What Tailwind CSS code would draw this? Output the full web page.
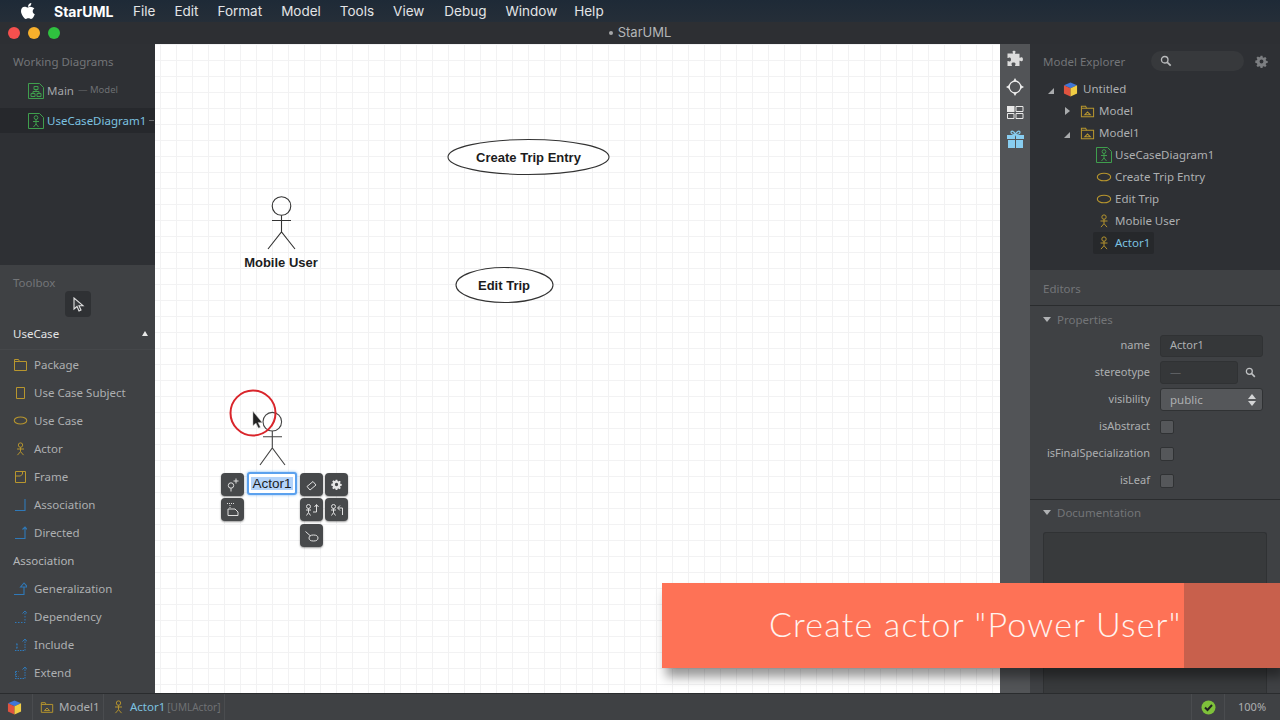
<!DOCTYPE html>
<html>
<head>
<meta charset="utf-8">
<script src="https://cdn.jsdelivr.net/npm/@tailwindcss/browser@4"></script>
</head>
<body class="m-0">
<svg width="0" height="0" class="absolute">
  <defs>
    <symbol id="actor" viewBox="0 0 14 16"><g fill="none" stroke="#b8962e" stroke-width="1.1"><circle cx="7" cy="3.5" r="2.5"/><path d="M7 6v5M3 8h8M7 11l-3.5 4M7 11l3.5 4"/></g></symbol>
    <symbol id="oval" viewBox="0 0 16 16"><ellipse cx="8" cy="8" rx="6.7" ry="3.8" fill="none" stroke="#b8962e" stroke-width="1.1"/></symbol>
    <symbol id="model" viewBox="0 0 16 16"><g fill="none" stroke="#b8962e" stroke-width="1.1"><path d="M1.5 13.5V2.5h4.5l1 2h7.5v9z"/><path d="M1.5 4.5h5.5M5 11.5l3-3 3 3z"/></g></symbol>
    <symbol id="dgactor" viewBox="0 0 16 16"><g fill="none" stroke="#3f9e4d" stroke-width="1"><path d="M.5.5h11l4 4v11H.5z"/><circle cx="8" cy="4.6" r="1.9"/><path d="M8 6.5v4.5M5 8.5h6M8 11l-2.5 3M8 11l2.5 3"/></g></symbol>
    <symbol id="cube" viewBox="0 0 16 16"><path d="M8 .5l7 3L8 6.600 1 3.500z" fill="#3f76d8"/><path d="M1 3.500l7 3.100V15.500l-7-3.300z" fill="#e0533f"/><path d="M15 3.500L8 6.600V15.500l7-3.300z" fill="#f0cd45"/></symbol>
    <symbol id="gear" viewBox="0 0 16 16"><path fill="currentColor" fill-rule="evenodd" d="M6.8 1h2.4l.4 2 1.2.5 1.7-1.1 1.7 1.7-1.1 1.7.5 1.2 2 .4v2.4l-2 .4-.5 1.2 1.1 1.7-1.7 1.7-1.7-1.1-1.2.5-.4 2H6.800l-.4-2-1.2-.5-1.700 1.100-1.700-1.700 1.100-1.700-.5-1.200-2-.4V6.800l2-.4.500-1.200-1.100-1.700 1.700-1.700 1.700 1.100 1.200-.5zM8 5.600a2.400 2.400 0 100 4.800 2.400 2.400 0 000-4.800z"/></symbol>
    <symbol id="search" viewBox="0 0 14 14"><circle cx="5.500" cy="5.500" r="3.800" fill="none" stroke="currentColor" stroke-width="1.600"/><path d="M8.500 8.500l4 4" stroke="currentColor" stroke-width="2"/></symbol>
  </defs>
</svg>

<div class="relative flex h-[720px] w-[1280px] flex-col overflow-hidden bg-[#3f4144] font-['Noto_Sans',sans-serif] text-[11.500px] text-[#adafb1]">
  <!-- mac menu bar -->
  <div class="flex h-[22px] shrink-0 items-center bg-linear-to-b from-[#1e2a37] to-[#252e38] font-['Inter',sans-serif] text-[13.500px] text-[#e2e4e6]">
    <svg class="ml-[21px] h-[16px] w-[14px]" viewBox="0 0 14 16"><path fill="#fff" d="M10.300 0c.1 1.100-.3 2-.9 2.700-.6.700-1.500 1.200-2.400 1.100-.1-1 .4-2 .9-2.600C8.500.500 9.500.100 10.300 0zM13.400 5.500c-1.100.7-1.700 1.600-1.700 2.800 0 1.400.8 2.400 2.100 3-.3.900-.8 1.800-1.300 2.600-.8 1.100-1.500 2-2.500 2-1 0-1.400-.6-2.600-.6s-1.600.6-2.600.6c-1 0-1.800-1-2.600-2.200C.8 11.900 0 9.800 0 8c0-2.700 1.800-4.200 3.600-4.200 1.100 0 2 .7 2.700.7.700 0 1.700-.8 3-.8 1.400.1 2.800.5 4.100 1.800z"/></svg>
    <span class="ml-[19px] w-[60px] whitespace-nowrap text-[14px] font-bold text-white">StarUML</span>
    <span class="ml-[19px]">File</span>
    <span class="ml-[19px]">Edit</span>
    <span class="ml-[19px]">Format</span>
    <span class="ml-[19px]">Model</span>
    <span class="ml-[19px]">Tools</span>
    <span class="ml-[19px]">View</span>
    <span class="ml-[20px]">Debug</span>
    <span class="ml-[19px]">Window</span>
    <span class="ml-[17px]">Help</span>
  </div>
  <!-- title bar -->
  <div class="relative flex h-[22px] shrink-0 items-center justify-center gap-[5px] bg-[#2d2f33] font-['Inter',sans-serif] text-[13px] text-[#b4b6b8]">
    <div class="absolute left-[8px] top-[5px] flex gap-[8px]">
      <span class="h-[12px] w-[12px] rounded-full bg-[#f5504e]"></span>
      <span class="h-[12px] w-[12px] rounded-full bg-[#f8b02c]"></span>
      <span class="h-[12px] w-[12px] rounded-full bg-[#2fc13f]"></span>
    </div>
    <span class="h-[4px] w-[4px] rounded-full bg-[#a4a6a8]"></span><span>StarUML</span>
  </div>

  <div class="flex min-h-0 flex-1">
    <!-- left -->
    <div class="flex w-[155px] shrink-0 flex-col overflow-hidden">
      <div class="h-[221px] shrink-0 bg-[#2e3034]">
        <div class="pl-[13px] pt-[9px] leading-[18px] text-[#737578]">Working Diagrams</div>
        <div class="mt-[7px] flex h-[25px] items-center whitespace-nowrap pl-[28px]">
          <svg class="mr-[3px] h-[16px] w-[16px]" viewBox="0 0 16 16"><g fill="none" stroke="#3f9e4d"><path d="M.5.5h11l4 4v11H.5z"/><path d="M6 3.500h4v3H6zM3 10.500h4v3H3zM9 10.500h4v3H9zM8 6.500v2M5 10.500v-2h6v2"/></g></svg>
          <span class="text-[#a4a6a9]">Main</span><span class="ml-[4px] text-[9.500px] text-[#6d6f72]">— Model</span>
        </div>
        <div class="mt-[5px] flex h-[25px] w-[155px] items-center whitespace-nowrap bg-[#26282c] pl-[28px]">
          <svg class="mr-[3px] h-[16px] w-[16px] shrink-0"><use href="#dgactor"/></svg>
          <span class="text-[#7cc2e0]">UseCaseDiagram1</span><span class="ml-[3px] h-px w-[5px] bg-[#6d6f72]"></span>
        </div>
      </div>
      <div class="min-h-0 flex-1 bg-[#3f4144]">
        <div class="pl-[13px] pt-[9px] leading-[18px] text-[#737578]">Toolbox</div>
        <div class="ml-[65px] -mt-px flex h-[26px] w-[26px] items-center justify-center rounded-[4px] bg-[#2f3134] pl-[2px]">
          <svg class="h-[15px] w-[12px]" viewBox="0 0 12 15"><path d="M1 1v11l3-2.500 2 4.500 2-1-2-4.300h4z" fill="#3a3c3f" stroke="#e2e2e2" stroke-width="1.100"/></svg>
        </div>
        <div class="mt-[5px] flex h-[28px] items-center justify-between border-b border-[#45474a] pb-[3px] pl-[13px] pr-[7px] text-[#e4e5e6]">
          <span>UseCase</span><span class="mb-[1px] h-0 w-0 border-x-[3.500px] border-b-[5px] border-x-transparent border-b-[#e8e8e8]"></span>
        </div>
        <div class="flex h-[28px] items-center pl-[14px] pt-[1px]"><svg class="mr-[7px] h-[14px] w-[13px]" viewBox="0 0 13 14"><path d="M.5 12.500V1.500h4l1 2h7v9zM.5 3.500h5" fill="none" stroke="#b8962e"/></svg>Package</div>
        <div class="flex h-[28px] items-center pl-[16px] pt-[1px]"><svg class="mr-[9px] h-[12px] w-[9px]" viewBox="0 0 9 12"><path d="M.5.500h8v11h-8z" fill="none" stroke="#b8962e"/></svg>Use Case Subject</div>
        <div class="flex h-[28px] items-center pl-[13px] pt-[1px]"><svg class="mr-[6px] h-[15px] w-[15px]"><use href="#oval"/></svg>Use Case</div>
        <div class="flex h-[28px] items-center pl-[14px] pt-[1px]"><svg class="mr-[7px] h-[14px] w-[13px]"><use href="#actor"/></svg>Actor</div>
        <div class="flex h-[28px] items-center pl-[15px] pt-[1px]"><svg class="mr-[8px] h-[12px] w-[11px]" viewBox="0 0 11 12"><path d="M.5.500h10v11H.5zM.5 5h5l2-2V.5" fill="none" stroke="#b8962e"/></svg>Frame</div>
        <div class="flex h-[28px] items-center pl-[14px] pt-[1px]"><svg class="mr-[7px] h-[14px] w-[13px]" viewBox="0 0 13 14"><path d="M1 12.500h10V1" fill="none" stroke="#2f79b9" stroke-width="1.100"/></svg>Association</div>
        <div class="flex h-[28px] items-center pl-[14px] pt-[1px]"><svg class="mr-[7px] h-[14px] w-[13px]" viewBox="0 0 13 14"><path d="M1 12.500h10V1M8.500 3.500L11 1l2 2.500" fill="none" stroke="#2f79b9" stroke-width="1.100"/></svg>Directed</div>
        <div class="flex h-[28px] items-center pl-[13px] pt-[1px] text-[#b4b6b8]">Association</div>
        <div class="flex h-[28px] items-center pl-[14px] pt-[1px]"><svg class="mr-[7px] h-[14px] w-[13px]" viewBox="0 0 13 14"><path d="M0 12.500h10V4.500M6.500 5L10 1l3.500 4z" fill="none" stroke="#2f79b9" stroke-width="1.100"/></svg>Generalization</div>
        <div class="flex h-[28px] items-center pl-[14px] pt-[1px]"><svg class="mr-[7px] h-[14px] w-[13px]" viewBox="0 0 13 14"><path d="M1 12.500h10V2" fill="none" stroke="#2f79b9" stroke-dasharray="1.500 1.500"/><path d="M8.500 3.500L11 1l2 2.500" fill="none" stroke="#2f79b9"/></svg>Dependency</div>
        <div class="flex h-[28px] items-center pl-[14px] pt-[1px]"><svg class="mr-[7px] h-[14px] w-[13px]" viewBox="0 0 13 14"><path d="M1 12.500h10V2M2 6h2M3 6v4M2 10h2" fill="none" stroke="#2f79b9" stroke-dasharray="1.500 1"/><path d="M8.500 3.500L11 1l2 2.500" fill="none" stroke="#2f79b9"/></svg>Include</div>
        <div class="flex h-[28px] items-center pl-[14px] pt-[1px]"><svg class="mr-[7px] h-[14px] w-[13px]" viewBox="0 0 13 14"><path d="M1 12.500h10V2M1.500 5.500h3M1.500 5.500v5h3M1.500 8h2" fill="none" stroke="#2f79b9" stroke-dasharray="1.500 1"/><path d="M8.500 3.500L11 1l2 2.500" fill="none" stroke="#2f79b9"/></svg>Extend</div>
      </div>
    </div>

    <!-- canvas -->
    <div class="relative w-[845px] shrink-0 overflow-hidden bg-white bg-[linear-gradient(to_right,#f2f2f3_1px,transparent_1px),linear-gradient(to_bottom,#f2f2f3_1px,transparent_1px)] bg-[size:16px_16px] bg-[position:5px_0px] font-['Liberation_Sans',sans-serif] text-[#1c1c1c]">
      <svg class="absolute left-0 top-0" width="845" height="649" viewBox="0 0 845 649">
        <g fill="#fff" stroke="#333" stroke-width="1.100">
          <ellipse cx="373.500" cy="113" rx="80.500" ry="17.500"/>
          <ellipse cx="349.500" cy="241" rx="48.500" ry="17.500"/>
        </g>
        <g fill="none" stroke="#333" stroke-width="1.100">
          <circle cx="126.500" cy="162" r="9.300"/><path d="M126.500 171.300V188M117 176.500h19M113 205l13.500-17 13.500 17"/>
        </g>
        <g fill="none" stroke="#444" stroke-width="1.100">
          <circle cx="117.300" cy="377.700" r="9.300"/><path d="M117.300 387v17M108 392.700h19M105 421l12.300-17 12.700 17"/>
        </g>
        <circle cx="98" cy="369" r="22.500" fill="none" stroke="#d9252b" stroke-width="2"/>
        <path d="M98 367.500v14l3-2.500 2.500 5 1.800-.8-2.300-4.800h4z" fill="#222" stroke="#aaa" stroke-width=".5"/>
      </svg>
      <div class="absolute left-[321px] top-[105px] w-[105px] text-center text-[13px] font-bold leading-[18px]">Create Trip Entry</div>
      <div class="absolute left-[299px] top-[233px] w-[100px] text-center text-[13px] font-bold leading-[18px]">Edit Trip</div>
      <div class="absolute left-[76px] top-[210px] w-[100px] text-center text-[13px] font-bold leading-[18px]">Mobile User</div>

      <!-- inline editor -->
      <div class="absolute left-[92px] top-[428px] flex h-[23px] w-[50px] items-center justify-center rounded-[3px] border-2 border-[#5ba1ee] bg-white text-[13.500px] leading-none shadow-[0_0_3px_#7ab4f0]"><span class="bg-[#b3d3fa] px-[1px]">Actor1</span></div>
      <div class="absolute left-[66px] top-[429px] flex h-[23px] w-[23px] items-center justify-center rounded-[4px] bg-[#47494b] shadow-[0_1px_2px_#0006]"><svg class="h-[15px] w-[15px]" viewBox="0 0 15 15"><g fill="none" stroke="#e0e0e0"><circle cx="6" cy="8.500" r="2.700"/><path d="M6 11.200v3.300M11 1.500v5M8.500 4h5"/></g></svg></div>
      <div class="absolute left-[66px] top-[454px] flex h-[23px] w-[23px] items-center justify-center rounded-[4px] bg-[#47494b] shadow-[0_1px_2px_#0006]"><svg class="h-[15px] w-[15px]" viewBox="0 0 15 15"><g fill="none" stroke="#e0e0e0"><path d="M2 1.500h7M5 3v3" stroke-dasharray="1 1"/><path d="M3 7h7l3 3v3.500H3z"/></g></svg></div>
      <div class="absolute left-[145px] top-[429px] flex h-[23px] w-[23px] items-center justify-center rounded-[4px] bg-[#47494b] shadow-[0_1px_2px_#0006]"><svg class="h-[15px] w-[15px]" viewBox="0 0 15 15"><path d="M3 9.500l6-5 3 3.500-6 5z" fill="none" stroke="#e0e0e0"/></svg></div>
      <div class="absolute left-[170px] top-[429px] flex h-[23px] w-[23px] items-center justify-center rounded-[4px] bg-[#47494b] text-[#e6e6e6] shadow-[0_1px_2px_#0006]"><svg class="h-[11px] w-[11px]"><use href="#gear"/></svg></div>
      <div class="absolute left-[145px] top-[454px] flex h-[23px] w-[23px] items-center justify-center rounded-[4px] bg-[#47494b] shadow-[0_1px_2px_#0006]"><svg class="h-[15px] w-[15px]" viewBox="0 0 15 15"><g fill="none" stroke="#e0e0e0"><circle cx="4.500" cy="4.500" r="2"/><path d="M4.500 6.500v4M2 8h5M4.500 10.500l-2 3M4.500 10.500l2 3M9 10h3.500V3M10.500 5l2-2.500 2 2.500"/></g></svg></div>
      <div class="absolute left-[170px] top-[454px] flex h-[23px] w-[23px] items-center justify-center rounded-[4px] bg-[#47494b] shadow-[0_1px_2px_#0006]"><svg class="h-[15px] w-[15px]" viewBox="0 0 15 15"><g fill="none" stroke="#e0e0e0"><circle cx="4.500" cy="4.500" r="2"/><path d="M4.500 6.500v4M2 8h5M4.500 10.500l-2 3M4.500 10.500l2 3M13.500 13V6H9M11 3.500L8.500 6 11 8.500"/></g></svg></div>
      <div class="absolute left-[145px] top-[480px] flex h-[23px] w-[23px] items-center justify-center rounded-[4px] bg-[#47494b] shadow-[0_1px_2px_#0006]"><svg class="h-[15px] w-[15px]" viewBox="0 0 15 15"><g fill="none" stroke="#e0e0e0"><ellipse cx="9.500" cy="10" rx="4.500" ry="3"/><path d="M1.500 3.500l5 4.500"/></g></svg></div>
    </div>

    <!-- tool strip -->
    <div class="flex w-[30px] shrink-0 flex-col items-center bg-[#525457] pt-[6px]">
      <svg class="h-[18px] w-[18px]" viewBox="0 0 18 18"><path fill="#dcdcdc" d="M6.500 1.500c0-1 3-1 3 0 0 1-.5 1.300-.5 2.300h4.500v4c1 0 1.300-.5 2.300-.5 1.500 0 1.500 4 0 4-1 0-1.300-.5-2.300-.5v5.200H9c0-1 .5-1.300.5-2.300 0-1.600-4-1.600-4 0 0 1 .5 1.300.5 2.300H1.500v-5c1 0 1.300.5 2.300.5 1.600 0 1.600-4 0-4-1 0-1.300.5-2.300.5v-4.500H7c0-1-.5-1.200-.5-2z"/></svg>
      <svg class="mt-[10px] h-[18px] w-[18px]" viewBox="0 0 18 18"><circle cx="9" cy="9" r="5.800" fill="none" stroke="#ececec" stroke-width="1.300"/><path fill="#ececec" d="M9 0l2 3.500H7zM9 18l-2-3.500h4zM0 9l3.500-2v4zM18 9l-3.500 2V7z"/></svg>
      <svg class="mt-[10px] h-[13px] w-[18px]" viewBox="0 0 18 13"><g fill="none" stroke="#e8e8e8"><path d="M1.500 7.500h6.500v5H1.500zM10 7.500h7v5h-7zM10 .5h7v5h-7z"/></g><path fill="#e8e8e8" d="M1 0h7.500v6H1z"/></svg>
      <svg class="mt-[11px] h-[18px] w-[17px]" viewBox="0 0 17 18"><g fill="#88cdf0"><path d="M0 5h8v4H0zM9 5h8v4H9zM1 10h7v8H1zM9 10h7v8H9z"/></g><path d="M8.500 4.500C6 4.500 4 3.800 4 2.300 4 .5 7.500.8 8.500 4.500 9.500.8 13 .5 13 2.300c0 1.500-2 2.200-4.500 2.200z" fill="none" stroke="#88cdf0" stroke-width="1.200"/></svg>
    </div>

    <!-- right -->
    <div class="flex w-[250px] shrink-0 flex-col overflow-hidden">
      <div class="h-[226px] shrink-0 bg-[#2e3034]">
        <div class="flex h-[34px] items-center pl-[13px]">
          <span class="mt-[2px] w-[108px] text-[#737578]">Model Explorer</span>
          <div class="flex h-[20px] w-[93px] items-center rounded-full bg-[#37393c] pl-[9px] text-[#b9babc]"><svg class="h-[12px] w-[12px]"><use href="#search"/></svg></div>
          <svg class="ml-[11px] h-[13px] w-[13px] text-[#7c7e81]"><use href="#gear"/></svg>
        </div>
        <div class="flex h-[22px] items-center"><span class="ml-[18px] mt-[3px] h-0 w-0 border-b-[6px] border-l-[6px] border-b-[#a9abad] border-l-transparent"></span><svg class="ml-[9px] mr-[5px] h-[15px] w-[15px]"><use href="#cube"/></svg>Untitled</div>
        <div class="flex h-[22px] items-center"><span class="ml-[35px] h-0 w-0 border-y-[4px] border-l-[5px] border-y-transparent border-l-[#a9abad]"></span><svg class="ml-[10px] mr-[4px] h-[15px] w-[15px]"><use href="#model"/></svg>Model</div>
        <div class="flex h-[22px] items-center"><span class="ml-[34px] mt-[3px] h-0 w-0 border-b-[6px] border-l-[6px] border-b-[#a9abad] border-l-transparent"></span><svg class="ml-[10px] mr-[4px] h-[15px] w-[15px]"><use href="#model"/></svg>Model1</div>
        <div class="flex h-[22px] items-center pl-[66px]"><svg class="mr-[3px] h-[16px] w-[16px]"><use href="#dgactor"/></svg>UseCaseDiagram1</div>
        <div class="flex h-[22px] items-center pl-[66px]"><svg class="mr-[3px] h-[16px] w-[16px]"><use href="#oval"/></svg>Create Trip Entry</div>
        <div class="flex h-[22px] items-center pl-[66px]"><svg class="mr-[3px] h-[16px] w-[16px]"><use href="#oval"/></svg>Edit Trip</div>
        <div class="flex h-[22px] items-center pl-[67px]"><svg class="mr-[4px] h-[14px] w-[14px]"><use href="#actor"/></svg>Mobile User</div>
        <div class="ml-[63px] flex h-[22px] w-[61px] items-center rounded-[2px] bg-[#26282b] pl-[4px] text-[#7cc2e0]"><svg class="mr-[4px] h-[14px] w-[14px]"><use href="#actor"/></svg>Actor1</div>
      </div>
      <div class="flex min-h-0 flex-1 flex-col bg-[#3f4144]">
        <div class="flex h-[36px] shrink-0 items-center border-b border-[#2a2c2e] pl-[13px] pt-[2px] text-[#737578]">Editors</div>
        <div class="flex h-[26px] shrink-0 items-center pl-[13px] pt-[1px] text-[#737578]"><span class="mr-[6px] h-0 w-0 border-x-[4px] border-t-[5px] border-x-transparent border-t-[#b0b2b4]"></span>Properties</div>
        <div class="grid shrink-0 grid-cols-[120px_1fr] items-center gap-x-[10px] text-[11px] auto-rows-[27px]">
          <span class="text-right">name</span>
          <div class="flex h-[22px] w-[103px] items-center rounded-[3px] border border-[#303234] bg-[#353739] pl-[9px]">Actor1</div>
          <span class="text-right">stereotype</span>
          <div class="flex items-center">
            <div class="flex h-[23px] w-[78px] items-center rounded-[3px] border border-[#303234] bg-[#353739] pl-[9px] text-[#5d5f62]">—</div>
            <svg class="ml-[7px] h-[11px] w-[11px] text-[#c0c2c4]"><use href="#search"/></svg>
          </div>
          <span class="text-right">visibility</span>
          <div class="flex h-[23px] w-[103px] items-center justify-between rounded-[3px] border border-[#303234] bg-[#55575a] pl-[9px] pr-[6px] text-[11.500px]">public
            <span class="flex flex-col gap-[2px]"><span class="h-0 w-0 border-x-[4px] border-b-[5px] border-x-transparent border-b-[#d4d5d6]"></span><span class="h-0 w-0 border-x-[4px] border-t-[5px] border-x-transparent border-t-[#d4d5d6]"></span></span>
          </div>
          <span class="text-right">isAbstract</span>
          <span class="h-[14px] w-[14px] rounded-[2px] border border-[#303234] bg-[#55575a]"></span>
          <span class="whitespace-nowrap text-right">isFinalSpecialization</span>
          <span class="h-[14px] w-[14px] rounded-[2px] border border-[#303234] bg-[#55575a]"></span>
          <span class="text-right">isLeaf</span>
          <span class="h-[14px] w-[14px] rounded-[2px] border border-[#303234] bg-[#55575a]"></span>
        </div>
        <div class="mt-[5px] flex h-[29px] shrink-0 items-center border-t border-[#2a2c2e] pb-[3px] pl-[13px] text-[#737578]"><span class="mr-[6px] h-0 w-0 border-x-[4px] border-t-[5px] border-x-transparent border-t-[#b0b2b4]"></span>Documentation</div>
        <div class="ml-[13px] mt-[4px] w-[224px] flex-1 rounded-t-[3px] border border-b-0 border-[#303234] bg-[#383a3c]"></div>
      </div>
    </div>
  </div>

  <!-- status bar -->
  <div class="flex h-[27px] shrink-0 items-center border-t border-[#2a2c2e] bg-[#3f4144] text-[#adafb1]">
    <div class="flex h-full w-[33px] items-center justify-center border-r border-[#4a4c4f] pr-[4px]"><svg class="h-[15px] w-[15px]"><use href="#cube"/></svg></div>
    <div class="flex h-full w-[71px] items-center border-r border-[#4a4c4f] pl-[7px]"><svg class="mr-[5px] h-[15px] w-[14px]"><use href="#model"/></svg>Model1</div>
    <div class="flex h-full w-[121px] items-center whitespace-nowrap border-r border-[#4a4c4f] pl-[8px]"><svg class="mr-[5px] h-[14px] w-[13px]"><use href="#actor"/></svg><span class="text-[#7cc2e0]">Actor1</span><span class="ml-[2px] text-[10px] text-[#6f7174]">[UMLActor]</span></div>
    <div class="ml-auto flex h-full w-[34px] items-center justify-center border-x border-[#4a4c4f]"><svg class="h-[15px] w-[15px]" viewBox="0 0 15 15"><circle cx="7.500" cy="7.500" r="7" fill="#7ec13a"/><path d="M4 7.500l2.500 2.500L11 5" fill="none" stroke="#222" stroke-width="2"/></svg></div>
    <div class="w-[55px] pl-[13px] text-[11px]">100%</div>
  </div>

  <!-- toast -->
  <div class="absolute left-[662px] top-[583px] flex h-[85px] w-[618px] shadow-[4px_9px_10px_#0006]">
    <div class="flex w-[522px] items-center bg-[#fe7256] pb-[5px] pl-[107px] font-['Lato',sans-serif] text-[34px] font-light tracking-[1.200px] whitespace-nowrap text-[#fff3ee]">Create actor "Power User"</div>
    <div class="flex-1 bg-[#c8604c]"></div>
  </div>
</div>
</body>
</html>
